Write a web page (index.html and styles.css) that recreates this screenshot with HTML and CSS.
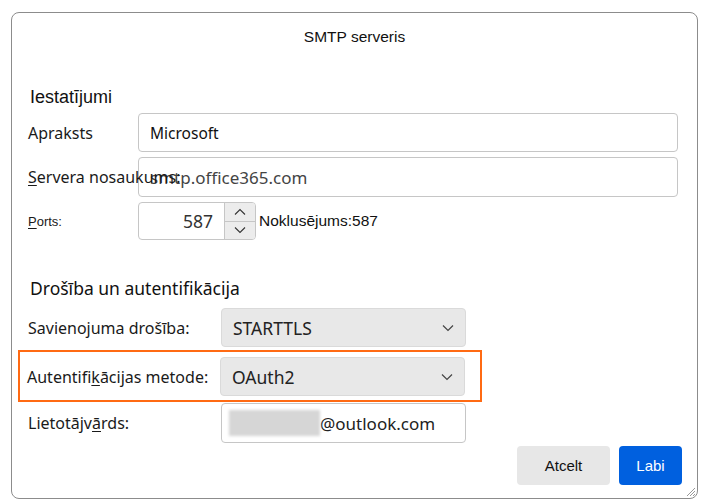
FILE: index.html
```html
<!DOCTYPE html>
<html lang="lv">
<head>
  <meta charset="UTF-8"/>
  <title>SMTP serveris</title>
  <link rel="stylesheet" href="styles.css">
</head>
<body>

  <div class="dialog">
    <div class="title">SMTP serveris</div>

    <h2 class="section">Iestatījumi</h2>

    <div class="row">
      <label class="lbl">Apraksts</label>
      <div class="field wide">Microsoft</div>
    </div>
    <div class="row gap5">
      <label class="lbl"><u>S</u>ervera nosaukums:</label>
      <div class="field wide server">smtp.office365.com</div>
    </div>
    <div class="row gap5">
      <label class="lbl small"><u>P</u>orts:</label>
      <div class="spin">
        <span class="spin-val">587</span>
        <span class="spin-btns">
          <span class="spin-btn">
            <svg width="12" height="8" viewBox="0 0 12 8"><path d="M1 6.5 L6 1.5 L11 6.5" fill="none" stroke="#333" stroke-width="1.1"/></svg>
          </span>
          <span class="spin-btn">
            <svg width="12" height="8" viewBox="0 0 12 8"><path d="M1 1.5 L6 6.5 L11 1.5" fill="none" stroke="#333" stroke-width="1.1"/></svg>
          </span>
        </span>
      </div>
      <span class="default">Noklusējums:587</span>
    </div>

    <h2 class="section second">Drošība un autentifikācija</h2>

    <div class="row sec">
      <label class="lbl lbl2">Savienojuma drošība:</label>
      <div class="select">STARTTLS
        <svg class="chev" width="12" height="8" viewBox="0 0 12 8"><path d="M1 1.5 L6 6.5 L11 1.5" fill="none" stroke="#444" stroke-width="1.2"/></svg>
      </div>
    </div>

    <div class="row highlight">
      <label class="lbl lbl2">Autentifi<u>k</u>ācijas metode:</label>
      <div class="select">OAuth2
        <svg class="chev" width="12" height="8" viewBox="0 0 12 8"><path d="M1 1.5 L6 6.5 L11 1.5" fill="none" stroke="#444" stroke-width="1.2"/></svg>
      </div>
    </div>

    <div class="row user">
      <label class="lbl lbl2">Lietotājv<u>ā</u>rds:</label>
      <div class="field narrow"><span class="blur"></span>@outlook.com</div>
    </div>

    <div class="actions">
      <button class="btn cancel">Atcelt</button>
      <button class="btn ok">Labi</button>
    </div>

    <svg class="grip" width="12" height="12" viewBox="0 0 12 12">
      <path d="M11 3 L3 11 M11 6 L6 11 M11 9 L9 11" stroke="#999" stroke-width="1"/>
    </svg>
  </div>

</body>
</html>
```

FILE: styles.css
```css
body {
  margin: 0;
  background: #fff;
  font-family: "Noto Sans", sans-serif;
  color: #1a1a1a;
}
.dialog {
  position: relative;
  box-sizing: border-box;
  margin: 12px 0 0 11px;
  width: 687px;
  height: 487px;
  border: 1px solid #8c8c8c;
  border-radius: 8px;
  padding: 0 15px 0 6px;
}
.title {
  height: 48px;
  line-height: 48px;
  text-align: center;
  font-family: "Liberation Sans", Arial, sans-serif;
  font-size: 15.5px;
  color: #111;
  margin-right: -9px;
}
.section {
  margin: 24px 0 0 12px;
  height: 24px;
  line-height: 24px;
  font-family: "Liberation Sans", Arial, sans-serif;
  font-weight: normal;
  font-size: 18px;
  color: #111;
}
.section.second {
  margin-top: 36px;
  font-family: "Noto Sans", sans-serif;
  font-size: 17.5px;
}
.row {
  display: flex;
  align-items: center;
  padding-left: 10px;
  margin-top: 4px;
}
.row.gap5 {
  margin-top: 5px;
}
.lbl {
  width: 110px;
  flex: none;
  white-space: nowrap;
  position: relative;
  z-index: 1;
  font-size: 16px;
  color: #1a1a1a;
}
.lbl.small {
  font-family: "Liberation Sans", Arial, sans-serif;
  font-size: 13px;
}
.lbl2 {
  width: 193px;
}
.lbl u {
  text-underline-offset: 2px;
}
.field {
  box-sizing: border-box;
  height: 39px;
  border: 1px solid #c6c6c6;
  border-radius: 4px;
  display: flex;
  align-items: center;
  padding-left: 11px;
  font-size: 15.5px;
  color: #111;
  background: #fff;
}
.field.wide {
  width: 540px;
}
.field.server {
  height: 40px;
  font-size: 17px;
  color: #444;
}
.spin {
  box-sizing: border-box;
  width: 118px;
  height: 38px;
  border: 1px solid #c6c6c6;
  border-radius: 4px;
  display: flex;
  overflow: hidden;
}
.spin-val {
  flex: 1;
  text-align: right;
  padding-right: 11px;
  line-height: 36px;
  font-size: 17.5px;
  color: #333;
}
.spin-btns {
  width: 30px;
  display: flex;
  flex-direction: column;
  border-left: 1px solid #c6c6c6;
}
.spin-btn {
  flex: 1;
  display: flex;
  align-items: center;
  justify-content: center;
  background: #ececec;
}
.spin-btn + .spin-btn {
  border-top: 1px solid #c6c6c6;
}
.default {
  margin-left: 3px;
  font-family: "Liberation Sans", Arial, sans-serif;
  font-size: 15.5px;
  color: #111;
}
.row.sec {
  margin-top: 8px;
}
.select {
  position: relative;
  box-sizing: border-box;
  width: 245px;
  height: 39px;
  border: 1px solid #dadada;
  border-radius: 4px;
  background: #e8e8e8;
  display: flex;
  align-items: center;
  padding-left: 11px;
  font-size: 17.5px;
  color: #222;
}
.chev {
  position: absolute;
  right: 11px;
  top: 15px;
}
.row.highlight {
  box-sizing: border-box;
  width: 464px;
  margin-top: 3px;
  padding: 5px 14px 4px 7px;
  border: 2px solid #ff6a13;
}
.row.user {
  margin-top: 1px;
}
.field.narrow {
  width: 245px;
  height: 40px;
  padding-left: 7px;
  font-size: 17px;
  color: #222;
}
.blur {
  width: 91px;
  height: 26px;
  background: #d6d6d6;
  filter: blur(1.5px);
}
.actions {
  display: flex;
  justify-content: flex-end;
  gap: 9px;
  margin-top: 3px;
}
.btn {
  height: 39px;
  border: none;
  border-radius: 4px;
  font-family: "Liberation Sans", Arial, sans-serif;
  font-size: 15px;
  padding: 0;
}
.cancel {
  width: 93px;
  background: #e7e7e7;
  color: #111;
}
.ok {
  width: 63px;
  background: #0060df;
  color: #fff;
}
.grip {
  position: absolute;
  right: 1px;
  bottom: 1px;
}
```
